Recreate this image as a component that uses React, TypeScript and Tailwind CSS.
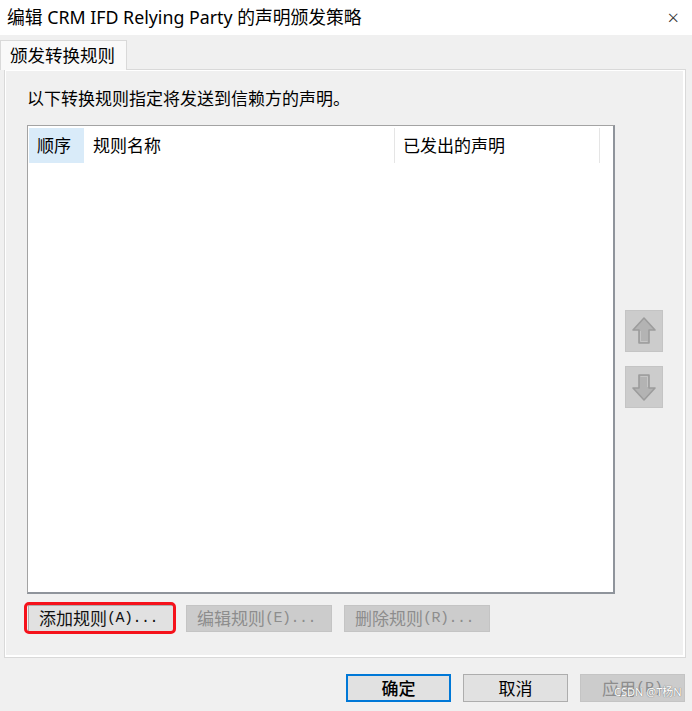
import type { ReactNode } from 'react';

const cjk = "font-['Noto_Sans','Noto_Sans_CJK_SC',sans-serif]";

function ArrowButton({ down }: { down?: boolean }) {
  return (
    <div className="w-[38px] h-[42px] bg-[#cccccc] border border-[#c4c4c4] flex items-center justify-center">
      <svg width="24" height="28" viewBox="0 0 24 28" className={down ? 'rotate-180' : ''}>
        <path
          d="M12 1 L23 13 L17 13 L17 26 L7 26 L7 13 L1 13 Z"
          fill="#b3b3b3"
          stroke="#9c9c9c"
          strokeWidth="1.6"
          strokeLinejoin="round"
        />
        <path d="M8.5 14 L8.5 24.5 L15.5 24.5" fill="none" stroke="#c6c6c6" strokeWidth="1" />
      </svg>
    </div>
  );
}

function RuleButton({ label, hotkey, disabled }: { label: string; hotkey: string; disabled?: boolean }) {
  return (
    <div
      className={
        'w-[146px] h-[27px] flex items-center pl-[10px] border ' +
        (disabled
          ? 'bg-[#cccccc] border-[#c4c4c4] text-[#8d8d8d]'
          : 'bg-[#e1e1e1] border-[#adadad] text-[#111]')
      }
    >
      <span className="text-[17px] leading-none">{label}</span>
      <span className="font-['Liberation_Mono',monospace] text-[15px] leading-none tracking-[-0.5px]">
        ({hotkey})...
      </span>
    </div>
  );
}

function DialogButton({ children, primary, disabled }: { children: ReactNode; primary?: boolean; disabled?: boolean }) {
  return (
    <div
      className={
        'w-[105px] h-[28px] flex items-center justify-center text-[17px] leading-none ' +
        (primary
          ? 'bg-[#e1e1e1] border-2 border-[#0078d7] text-black font-medium'
          : disabled
            ? 'bg-[#cccccc] border border-[#c4c4c4] text-[#8d8d8d]'
            : 'bg-[#e1e1e1] border border-[#adadad] text-black')
      }
    >
      {children}
    </div>
  );
}

export default function App() {
  return (
    <div className={`w-[692px] h-[711px] bg-[#f0f0f0] relative overflow-hidden ${cjk}`}>
      {/* title bar */}
      <div className="h-[35px] bg-white flex items-center justify-between pl-[7px] pr-[13px]">
        <span className="text-[17.8px] text-black leading-none">编辑 CRM IFD Relying Party 的声明颁发策略</span>
        <span className="text-[20px] font-light text-[#333] leading-none">×</span>
      </div>

      {/* tab */}
      <div className="mt-[5px] flex">
        <div className="relative z-10 -mb-px w-[127px] h-[30px] bg-[#f9f9f9] border border-b-0 border-[#d9d9d9] flex items-center pl-[9px]">
          <span className="text-[17.5px] leading-none text-black">颁发转换规则</span>
        </div>
      </div>

      {/* panel */}
      <div className="ml-[4px] w-[682px] h-[589px] border border-[#d9d9d9] shadow-[inset_1px_1px_0_#ffffff,inset_-2px_-2px_0_#ffffff] pl-[22px]">
        <div className="mt-[16px] h-[24px] flex items-center text-[17px] leading-none text-black">
          以下转换规则指定将发送到信赖方的声明。
        </div>

        <div className="mt-[15px] flex">
          {/* list */}
          <div className="w-[588px] h-[469px] bg-white border border-[#a3a3a3] border-r-2 border-b-2 border-r-[#8f949b] border-b-[#8f949b] pt-[2px] pl-px">
            <div className="h-[35px] flex text-[17px] leading-none text-black">
              <div className="w-[55px] bg-[#d9ebf9] flex items-center pl-[8px]">顺序</div>
              <div className="w-[311px] flex items-center pl-[9px] border-r border-[#e5e5e5]">规则名称</div>
              <div className="w-[205px] flex items-center pl-[8px] border-r border-[#e5e5e5]">已发出的声明</div>
            </div>
          </div>

          {/* move buttons */}
          <div className="ml-[10px] pt-[185px] flex flex-col gap-[14px]">
            <ArrowButton />
            <ArrowButton down />
          </div>
        </div>

        <div className="mt-[11px] flex gap-[12px] pl-px">
          <div className="relative">
            <RuleButton label="添加规则" hotkey="A" />
            <div className="absolute -left-[4px] -top-[3px] w-[152px] h-[32px] border-[3px] border-[#f5121b] rounded-[5px]" />
          </div>
          <RuleButton label="编辑规则" hotkey="E" disabled />
          <RuleButton label="删除规则" hotkey="R" disabled />
        </div>
      </div>

      {/* dialog buttons */}
      <div className="mt-[16px] pr-[7px] flex justify-end gap-[12px]">
        <DialogButton primary>确定</DialogButton>
        <DialogButton>取消</DialogButton>
        <DialogButton disabled>
          应用<span className="font-['Liberation_Mono',monospace] text-[15px]">(P)</span>
        </DialogButton>
      </div>

      {/* watermark */}
      <div className="absolute left-[614px] top-[686px] text-[11px] leading-none text-white [text-shadow:0_0_1px_#777,0_0_1px_#777]">
        CSDN @T杨N
      </div>
    </div>
  );
}
